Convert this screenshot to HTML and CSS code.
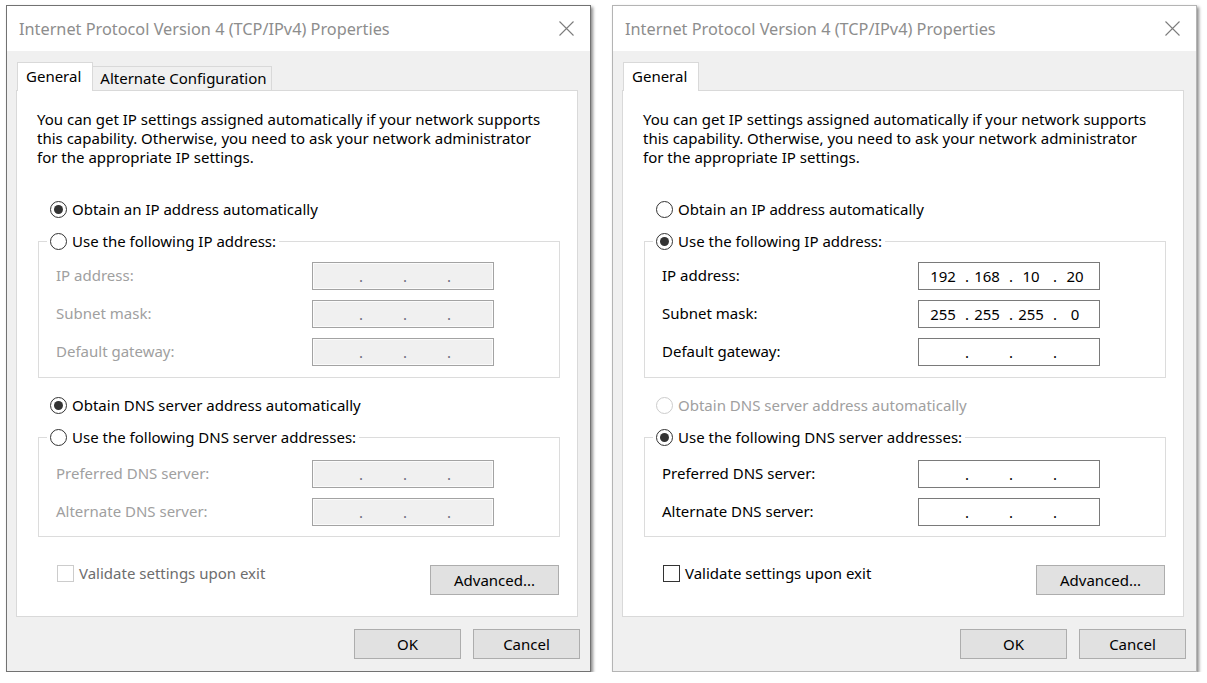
FILE: index.html
```html
<!DOCTYPE html>
<html lang="en">
<head>
<meta charset="utf-8">
<title>IPv4 Properties</title>
<link rel="stylesheet" href="styles.css">
</head>
<body>
<div class="desk">

  <div class="win">
    <div class="titlebar">
      <span class="title">Internet Protocol Version 4 (TCP/IPv4) Properties</span>
      <svg class="close" width="15" height="15" viewBox="0 0 15 15"><path d="M0.5 0.5 L14.5 14.5 M14.5 0.5 L0.5 14.5"/></svg>
    </div>
    <div class="winbody">
      <div class="tabs">
        <div class="tab active">General</div>
        <div class="tab">Alternate Configuration</div>
      </div>
      <div class="panel">
        <p class="intro">You can get IP settings assigned automatically if your network supports<br>this capability. Otherwise, you need to ask your network administrator<br>for the appropriate IP settings.</p>

        <div class="opt first"><span class="radio on"></span>Obtain an IP address automatically</div>
        <fieldset class="group">
          <legend><span class="radio"></span>Use the following IP address:</legend>
          <div class="rows">
            <span class="lbl dis">IP address:</span>
            <div class="ip dis"><span class="seg"></span><span class="dot">.</span><span class="seg"></span><span class="dot">.</span><span class="seg"></span><span class="dot">.</span><span class="seg"></span></div>
            <span class="lbl dis">Subnet mask:</span>
            <div class="ip dis"><span class="seg"></span><span class="dot">.</span><span class="seg"></span><span class="dot">.</span><span class="seg"></span><span class="dot">.</span><span class="seg"></span></div>
            <span class="lbl dis">Default gateway:</span>
            <div class="ip dis"><span class="seg"></span><span class="dot">.</span><span class="seg"></span><span class="dot">.</span><span class="seg"></span><span class="dot">.</span><span class="seg"></span></div>
          </div>
        </fieldset>

        <div class="opt second"><span class="radio on"></span>Obtain DNS server address automatically</div>
        <fieldset class="group dns">
          <legend><span class="radio"></span>Use the following DNS server addresses:</legend>
          <div class="rows">
            <span class="lbl dis">Preferred DNS server:</span>
            <div class="ip dis"><span class="seg"></span><span class="dot">.</span><span class="seg"></span><span class="dot">.</span><span class="seg"></span><span class="dot">.</span><span class="seg"></span></div>
            <span class="lbl dis">Alternate DNS server:</span>
            <div class="ip dis"><span class="seg"></span><span class="dot">.</span><span class="seg"></span><span class="dot">.</span><span class="seg"></span><span class="dot">.</span><span class="seg"></span></div>
          </div>
        </fieldset>

        <div class="bottom">
          <div class="check dis"><span class="box"></span>Validate settings upon exit</div>
          <button class="btn adv">Advanced...</button>
        </div>
      </div>
      <div class="actions">
        <button class="btn act">OK</button>
        <button class="btn act">Cancel</button>
      </div>
    </div>
  </div>

  <div class="win light">
    <div class="titlebar">
      <span class="title">Internet Protocol Version 4 (TCP/IPv4) Properties</span>
      <svg class="close" width="15" height="15" viewBox="0 0 15 15"><path d="M0.5 0.5 L14.5 14.5 M14.5 0.5 L0.5 14.5"/></svg>
    </div>
    <div class="winbody">
      <div class="tabs">
        <div class="tab active">General</div>
      </div>
      <div class="panel">
        <p class="intro">You can get IP settings assigned automatically if your network supports<br>this capability. Otherwise, you need to ask your network administrator<br>for the appropriate IP settings.</p>

        <div class="opt first"><span class="radio"></span>Obtain an IP address automatically</div>
        <fieldset class="group">
          <legend><span class="radio on"></span>Use the following IP address:</legend>
          <div class="rows">
            <span class="lbl">IP address:</span>
            <div class="ip"><span class="seg">192</span><span class="dot">.</span><span class="seg">168</span><span class="dot">.</span><span class="seg">10</span><span class="dot">.</span><span class="seg">20</span></div>
            <span class="lbl">Subnet mask:</span>
            <div class="ip"><span class="seg">255</span><span class="dot">.</span><span class="seg">255</span><span class="dot">.</span><span class="seg">255</span><span class="dot">.</span><span class="seg">0</span></div>
            <span class="lbl">Default gateway:</span>
            <div class="ip"><span class="seg"></span><span class="dot">.</span><span class="seg"></span><span class="dot">.</span><span class="seg"></span><span class="dot">.</span><span class="seg"></span></div>
          </div>
        </fieldset>

        <div class="opt second dis"><span class="radio"></span>Obtain DNS server address automatically</div>
        <fieldset class="group dns">
          <legend><span class="radio on"></span>Use the following DNS server addresses:</legend>
          <div class="rows">
            <span class="lbl">Preferred DNS server:</span>
            <div class="ip"><span class="seg"></span><span class="dot">.</span><span class="seg"></span><span class="dot">.</span><span class="seg"></span><span class="dot">.</span><span class="seg"></span></div>
            <span class="lbl">Alternate DNS server:</span>
            <div class="ip"><span class="seg"></span><span class="dot">.</span><span class="seg"></span><span class="dot">.</span><span class="seg"></span><span class="dot">.</span><span class="seg"></span></div>
          </div>
        </fieldset>

        <div class="bottom">
          <div class="check"><span class="box"></span>Validate settings upon exit</div>
          <button class="btn adv">Advanced...</button>
        </div>
      </div>
      <div class="actions">
        <button class="btn act">OK</button>
        <button class="btn act">Cancel</button>
      </div>
    </div>
  </div>

</div>
</body>
</html>
```
FILE: styles.css
```css
html, body {
  margin: 0;
  background: #ffffff;
}
body {
  font-family: "Noto Sans", "Open Sans", sans-serif;
  font-size: 15px;
  line-height: 19px;
  color: #000;
}
.desk {
  display: flex;
  gap: 21px;
  padding: 5px 0 0 6px;
  align-items: flex-start;
}
.win {
  width: 585px;
  box-sizing: border-box;
  border: 1px solid #727272;
  background: #f0f0f0;
  box-shadow: 2px 2px 3px rgba(0, 0, 0, 0.45);
}
.win.light {
  border-color: #b4b4b4;
}
.titlebar {
  height: 45px;
  background: #fff;
  display: flex;
  align-items: center;
  justify-content: space-between;
  padding: 0 16px 0 12px;
}
.title {
  font-size: 16.3px;
  line-height: 45px;
  padding-top: 2px;
  color: #8d8d8d;
  white-space: nowrap;
}
.close {
  display: block;
  flex: none;
}
.close path {
  stroke: #7c7c7c;
  stroke-width: 1.1;
  fill: none;
}
.winbody {
  padding: 11px 12px 12px 9px;
}
.tabs {
  display: flex;
  align-items: flex-end;
  height: 28px;
  margin-left: 1px;
}
.tab {
  height: 24px;
  box-sizing: border-box;
  border: 1px solid #d9d9d9;
  border-bottom: none;
  background: #f0f0f0;
  padding: 0 4px 0 7px;
  line-height: 22px;
  white-space: nowrap;
}
.tab + .tab {
  margin-left: -1px;
}
.tab.active {
  height: 29px;
  margin-bottom: -1px;
  background: #fff;
  position: relative;
  z-index: 1;
  padding: 0 11px 0 8px;
  line-height: 26px;
}
.panel {
  border: 1px solid #d9d9d9;
  background: #fff;
  padding: 19px 17px 21px 21px;
}
.intro {
  margin: 0 0 0 -1px;
  white-space: nowrap;
}
.opt {
  display: flex;
  align-items: center;
  height: 19px;
  margin-left: 12px;
  white-space: nowrap;
}
.opt.first {
  margin-top: 33px;
}
.opt.second {
  margin-top: 18px;
}
.opt.dis {
  color: #a0a0a0;
}
.radio {
  width: 17px;
  height: 17px;
  box-sizing: border-box;
  border: 1px solid #333;
  border-radius: 50%;
  background: #fff;
  margin-right: 5px;
  flex: none;
  display: flex;
  align-items: center;
  justify-content: center;
}
.opt.dis .radio {
  border-color: #cccccc;
}
.radio.on::after {
  content: "";
  width: 9px;
  height: 9px;
  border-radius: 50%;
  background: #333;
}
.group {
  margin: 13px 0 0;
  padding: 0;
  border: 1px solid #dcdcdc;
  min-width: 0;
}
.group legend {
  display: flex;
  align-items: center;
  height: 19px;
  padding: 0 3px;
  margin-left: 8px;
  white-space: nowrap;
}
.rows {
  display: grid;
  grid-template-columns: 256px 182px;
  row-gap: 10px;
  align-items: center;
  padding: 11px 0 11px 17px;
}
.group.dns .rows {
  padding: 13px 0 10px 17px;
}
.lbl {
  white-space: nowrap;
  padding-bottom: 2px;
}
.lbl.dis {
  color: #a0a0a0;
}
.ip {
  height: 28px;
  box-sizing: border-box;
  border: 1px solid #7a7a7a;
  background: #fff;
  display: flex;
  align-items: center;
  padding-left: 6px;
}
.ip.dis {
  background: #f0f0f0;
  border-color: #a3a3a3;
  box-shadow: inset 0 0 0 1px #fbfbfb;
  color: #6d6d7d;
}
.seg {
  width: 36px;
  text-align: center;
  flex: none;
}
.dot {
  width: 8px;
  text-align: right;
  flex: none;
}
.bottom {
  display: flex;
  justify-content: space-between;
  align-items: flex-start;
  margin-top: 27px;
}
.check {
  display: flex;
  align-items: center;
  height: 19px;
  margin-left: 19px;
  white-space: nowrap;
}
.check .box {
  width: 17px;
  height: 17px;
  box-sizing: border-box;
  border: 1px solid #333;
  background: #fff;
  margin-right: 5px;
}
.check.dis {
  color: #6d6d6d;
}
.check.dis .box {
  border-color: #cccccc;
}
.btn {
  font-family: inherit;
  font-size: 15px;
  line-height: 19px;
  color: #000;
  background: #e1e1e1;
  border: 1px solid #adadad;
  padding: 0;
  margin: 0;
}
.btn.adv {
  width: 129px;
  height: 30px;
  margin-top: 1px;
  margin-right: 1px;
}
.actions {
  display: flex;
  justify-content: flex-end;
  gap: 12px;
  margin-top: 12px;
  margin-right: -2px;
}
.btn.act {
  width: 107px;
  height: 30px;
}
```
